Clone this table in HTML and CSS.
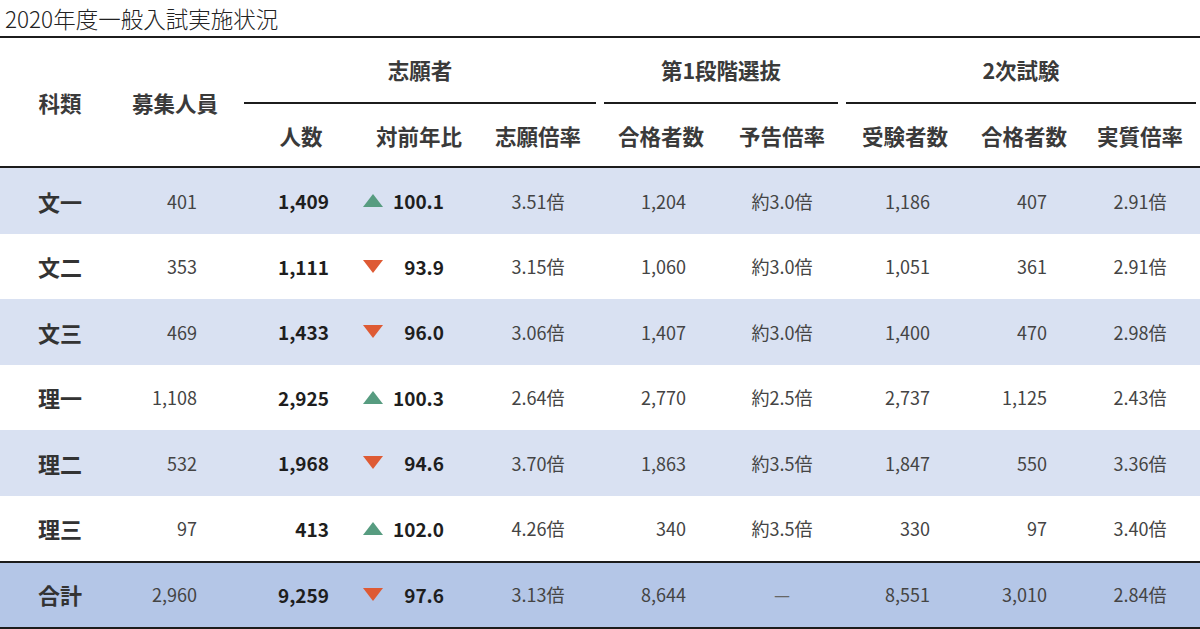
FILE: index.html
```html
<!DOCTYPE html>
<html lang="ja">
<head>
<meta charset="utf-8">
<title>2020年度一般入試実施状況</title>
<link rel="stylesheet" href="styles.css">
</head>
<body>
<div class="title">2020年度一般入試実施状況</div>
<table class="stats">
  <colgroup>
    <col class="w120"><col class="w120"><col class="w122"><col class="w114"><col class="w124">
    <col class="w122"><col class="w120"><col class="w126"><col class="w112"><col class="w120">
  </colgroup>
  <thead>
    <tr class="h-top">
      <th rowspan="2" class="span2">科類</th>
      <th rowspan="2" class="span2 recruit">募集人員</th>
      <th colspan="3" class="group"><span class="grp">志願者</span></th>
      <th colspan="2" class="group"><span class="grp">第1段階選抜</span></th>
      <th colspan="3" class="group"><span class="grp">2次試験</span></th>
    </tr>
    <tr class="h-sub">
      <th>人数</th><th>対前年比</th><th>志願倍率</th>
      <th>合格者数</th><th>予告倍率</th>
      <th>受験者数</th><th>合格者数</th><th>実質倍率</th>
    </tr>
  </thead>
  <tbody>
    <tr class="odd">
      <td class="lbl">文一</td><td class="n r2">401</td><td class="b r3">1,409</td>
      <td class="cmp"><div class="cmpbox"><svg class="tri up" viewBox="0 0 20 13"><polygon points="10,0 20,13 0,13"/></svg><span class="b">100.1</span></div></td>
      <td class="n c">3.51倍</td><td class="n r6">1,204</td><td class="n c">約3.0倍</td><td class="n r8">1,186</td><td class="n r9">407</td><td class="n c">2.91倍</td>
    </tr>
    <tr>
      <td class="lbl">文二</td><td class="n r2">353</td><td class="b r3">1,111</td>
      <td class="cmp"><div class="cmpbox"><svg class="tri down" viewBox="0 0 20 13"><polygon points="0,0 20,0 10,13"/></svg><span class="b">93.9</span></div></td>
      <td class="n c">3.15倍</td><td class="n r6">1,060</td><td class="n c">約3.0倍</td><td class="n r8">1,051</td><td class="n r9">361</td><td class="n c">2.91倍</td>
    </tr>
    <tr class="odd">
      <td class="lbl">文三</td><td class="n r2">469</td><td class="b r3">1,433</td>
      <td class="cmp"><div class="cmpbox"><svg class="tri down" viewBox="0 0 20 13"><polygon points="0,0 20,0 10,13"/></svg><span class="b">96.0</span></div></td>
      <td class="n c">3.06倍</td><td class="n r6">1,407</td><td class="n c">約3.0倍</td><td class="n r8">1,400</td><td class="n r9">470</td><td class="n c">2.98倍</td>
    </tr>
    <tr>
      <td class="lbl">理一</td><td class="n r2">1,108</td><td class="b r3">2,925</td>
      <td class="cmp"><div class="cmpbox"><svg class="tri up" viewBox="0 0 20 13"><polygon points="10,0 20,13 0,13"/></svg><span class="b">100.3</span></div></td>
      <td class="n c">2.64倍</td><td class="n r6">2,770</td><td class="n c">約2.5倍</td><td class="n r8">2,737</td><td class="n r9">1,125</td><td class="n c">2.43倍</td>
    </tr>
    <tr class="odd">
      <td class="lbl">理二</td><td class="n r2">532</td><td class="b r3">1,968</td>
      <td class="cmp"><div class="cmpbox"><svg class="tri down" viewBox="0 0 20 13"><polygon points="0,0 20,0 10,13"/></svg><span class="b">94.6</span></div></td>
      <td class="n c">3.70倍</td><td class="n r6">1,863</td><td class="n c">約3.5倍</td><td class="n r8">1,847</td><td class="n r9">550</td><td class="n c">3.36倍</td>
    </tr>
    <tr>
      <td class="lbl">理三</td><td class="n r2">97</td><td class="b r3">413</td>
      <td class="cmp"><div class="cmpbox"><svg class="tri up" viewBox="0 0 20 13"><polygon points="10,0 20,13 0,13"/></svg><span class="b">102.0</span></div></td>
      <td class="n c">4.26倍</td><td class="n r6">340</td><td class="n c">約3.5倍</td><td class="n r8">330</td><td class="n r9">97</td><td class="n c">3.40倍</td>
    </tr>
    <tr class="total">
      <td class="lbl">合計</td><td class="n r2">2,960</td><td class="b r3">9,259</td>
      <td class="cmp"><div class="cmpbox"><svg class="tri down" viewBox="0 0 20 13"><polygon points="0,0 20,0 10,13"/></svg><span class="b">97.6</span></div></td>
      <td class="n c">3.13倍</td><td class="n r6">8,644</td><td class="n c dash">—</td><td class="n r8">8,551</td><td class="n r9">3,010</td><td class="n c">2.84倍</td>
    </tr>
  </tbody>
</table>
</body>
</html>
```

FILE: styles.css
```css
html, body {
  margin: 0;
  padding: 0;
  background: #fff;
}
body {
  width: 1200px;
  font-family: "Noto Sans CJK JP", "Noto Sans", sans-serif;
  color: #333;
}
.title {
  height: 36px;
  line-height: 36px;
  padding-left: 5px;
  font-size: 22.5px;
  font-weight: 300;
  color: #222;
  white-space: nowrap;
}
.stats {
  width: 1200px;
  table-layout: fixed;
  border-collapse: separate;
  border-spacing: 0;
}
.w112 { width: 112px; }
.w114 { width: 114px; }
.w120 { width: 120px; }
.w122 { width: 122px; }
.w124 { width: 124px; }
.w126 { width: 126px; }

.stats th {
  font-size: 21.5px;
  font-weight: 700;
  color: #3a3a3a;
  text-align: center;
  padding: 0;
  white-space: nowrap;
}
.h-top th {
  border-top: 2px solid #1c1c1c;
  height: 66px;
}
.h-top th.span2 {
  border-bottom: 2px solid #1c1c1c;
}
.h-top th.recruit {
  padding-right: 10px;
}
.h-top th.group {
  vertical-align: bottom;
  padding: 0 4px;
}
.grp {
  display: block;
  height: 64px;
  line-height: 64px;
  border-bottom: 2px solid #1c1c1c;
}
.h-sub th {
  height: 62px;
  border-bottom: 2px solid #1c1c1c;
}

.stats td {
  height: 65.5px;
  padding: 0;
  vertical-align: middle;
  white-space: nowrap;
  font-size: 18px;
  color: #444;
}
.stats tr.odd td {
  background: #d9e1f2;
}
.stats tr.total td {
  background: #b4c6e7;
  height: 62px;
  padding-bottom: 2px;
  border-top: 2px solid #1c1c1c;
  border-bottom: 2px solid #1c1c1c;
}
.lbl {
  text-align: center;
  font-size: 22px !important;
  font-weight: 700;
  color: #333 !important;
}
.n {
  font-weight: 400;
}
.b {
  font-weight: 700;
  font-size: 19px;
  color: #1e1e1e;
}
td.b {
  font-size: 19px;
  color: #1e1e1e;
}
.c { text-align: center; }
.r2 { text-align: right; padding-right: 43px !important; }
.r3 { text-align: right; padding-right: 33px !important; }
.r6 { text-align: right; padding-right: 36px !important; }
.r8 { text-align: right; padding-right: 38px !important; }
.r9 { text-align: right; padding-right: 33px !important; }
.cmpbox {
  display: flex;
  align-items: center;
  justify-content: space-between;
  padding: 0 32px 0 1px;
}
.tri {
  width: 20px;
  height: 13px;
  display: block;
}
.tri.up { fill: #579c80; }
.tri.down { fill: #de5a34; }
.dash {
  color: #666 !important;
}
```
